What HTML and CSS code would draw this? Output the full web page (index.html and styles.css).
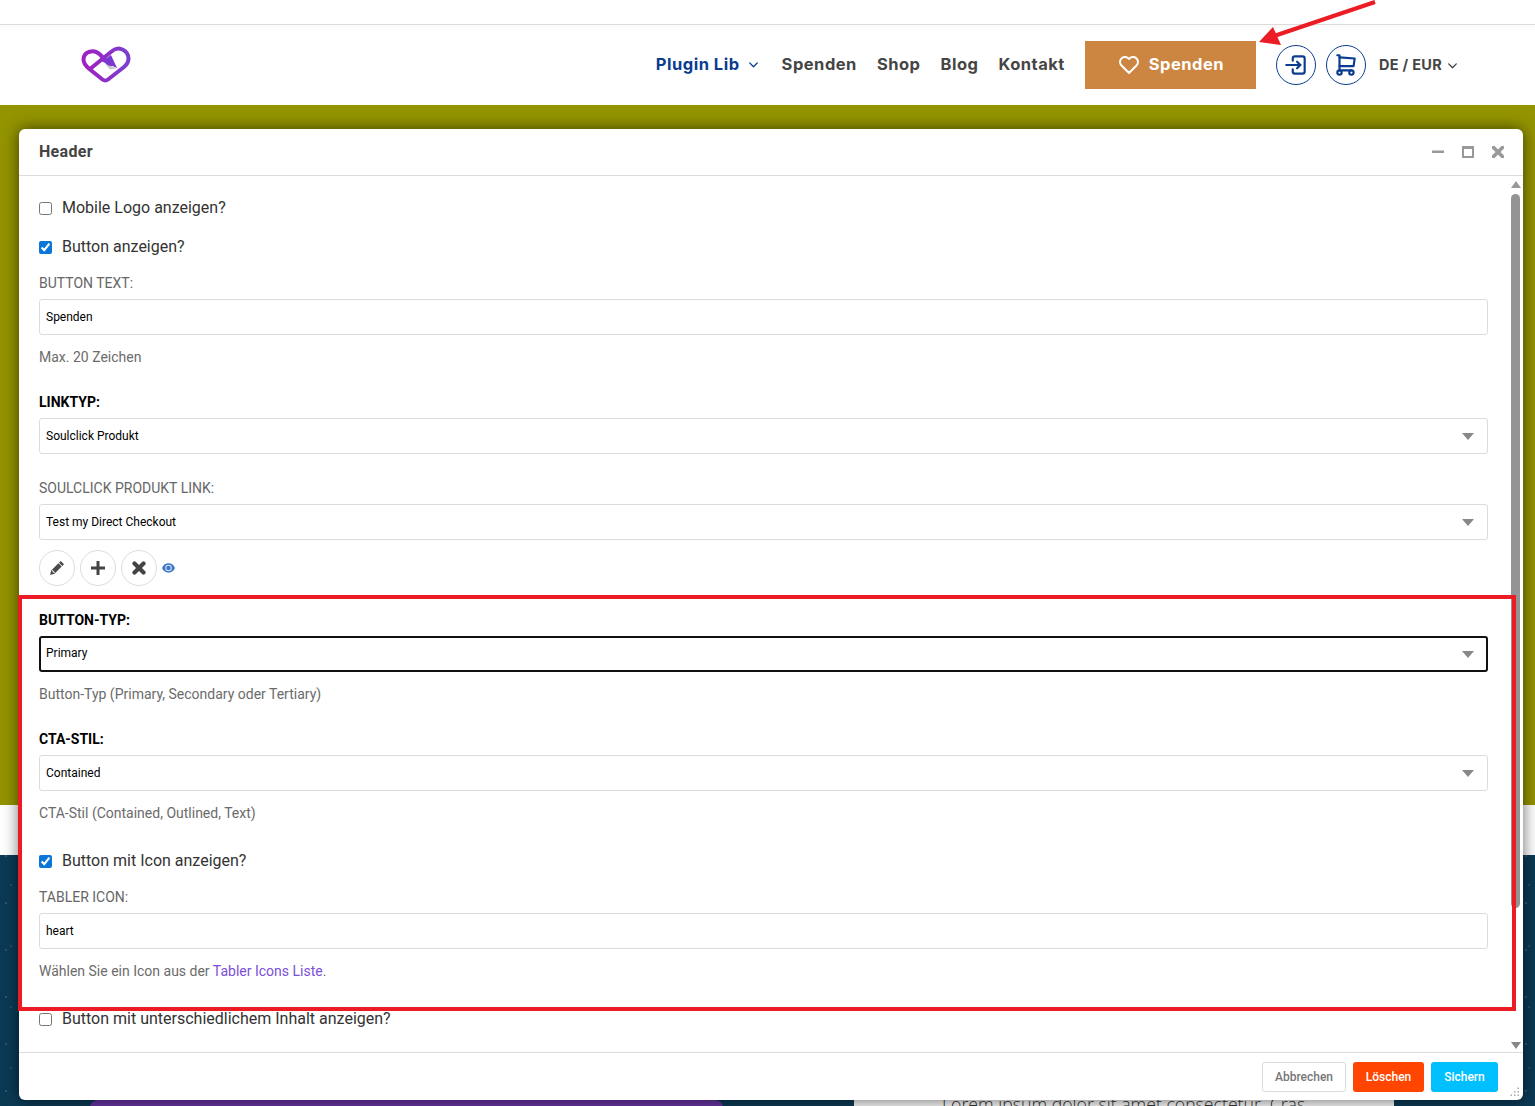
FILE: index.html
```html
<!DOCTYPE html>
<html lang="de">
<head>
<meta charset="utf-8">
<title>Header</title>
<link rel="stylesheet" href="styles.css">
</head>
<body>
<div class="page">
  <div class="topstrip"></div>
  <header class="site-header">
    <a class="logo" href="#" aria-label="Logo">
      <svg width="50" height="38" viewBox="81 46 50 38">
        <defs><linearGradient id="lg" x1="0" y1="0" x2="1" y2="0"><stop offset="0" stop-color="#a020c0"/><stop offset="1" stop-color="#7a3fd0"/></linearGradient></defs>
        <path d="M110 66 100 55.500C94 49.500 83.500 52.500 83.500 60.500C83.500 65.500 87 68 90 70.500L102.500 80.500C104.500 82 106 82 108 80.500L124 68C127 65.500 128.500 63 128.500 59.500C128.500 52.500 119.500 45.500 111.500 52.500L90 70" fill="none" stroke="url(#lg)" stroke-width="4" stroke-linejoin="round" stroke-linecap="round"/>
        <path d="M105 65 117 69.500 110 70.500Z" fill="#c9c9c9"/>
        <path d="M102 62.500 111 56 117 69Z" fill="#7a38d0"/>
      </svg>
    </a>
    <nav class="nav">
      <a class="nav-link active" href="#">Plugin Lib<svg class="chev" width="13" height="13" viewBox="0 0 24 24"><path d="M5 9l7 7 7-7"/></svg></a>
      <a class="nav-link" href="#">Spenden</a>
      <a class="nav-link" href="#">Shop</a>
      <a class="nav-link" href="#">Blog</a>
      <a class="nav-link" href="#">Kontakt</a>
    </nav>
    <a class="cta" href="#">
      <svg width="24" height="24" viewBox="0 0 24 24" fill="none" stroke="#fff" stroke-width="2" stroke-linecap="round" stroke-linejoin="round"><path d="M19.500 12.572l-7.500 7.428l-7.500 -7.428a5 5 0 1 1 7.500 -6.566a5 5 0 1 1 7.500 6.572"/></svg>
      <span>Spenden</span>
    </a>
    <a class="circle-btn" href="#" aria-label="Login">
      <svg width="26" height="26" viewBox="0 0 24 24" fill="none" stroke="#0a3d8f" stroke-width="2" stroke-linecap="round" stroke-linejoin="round"><path d="M9 8v-2a2 2 0 0 1 2 -2h7a2 2 0 0 1 2 2v12a2 2 0 0 1 -2 2h-7a2 2 0 0 1 -2 -2v-2"/><path d="M3 12h13l-3 -3"/><path d="M13 15l3 -3"/></svg>
    </a>
    <a class="circle-btn" href="#" aria-label="Warenkorb">
      <svg width="26" height="26" viewBox="0 0 24 24" fill="none" stroke="#0a3d8f" stroke-width="2" stroke-linecap="round" stroke-linejoin="round"><path d="M6 19m-2 0a2 2 0 1 0 4 0a2 2 0 1 0 -4 0"/><path d="M17 19m-2 0a2 2 0 1 0 4 0a2 2 0 1 0 -4 0"/><path d="M17 17h-11v-14h-2"/><path d="M6 5l14 1l-1 7h-13"/></svg>
    </a>
    <a class="lang" href="#">DE / EUR<svg class="chev" width="13" height="13" viewBox="0 0 24 24"><path d="M5 9l7 7 7-7"/></svg></a>
  </header>
  <section class="olive"></section>
  <section class="plain"></section>
  <section class="hero">
    <div class="purple"></div>
    <div class="hero-card"><p>Lorem ipsum dolor sit amet consectetur. Cras</p></div>
  </section>
</div>

<div class="modal">
  <div class="modal-head">
    <h2 class="modal-title">Header</h2>
    <div class="win-controls">
      <svg width="12" height="12" viewBox="0 0 12 12"><rect x="0" y="4.500" width="12" height="2.500" fill="#999"/></svg>
      <svg width="12" height="12" viewBox="0 0 12 12"><path d="M1 1h10v10H1z" fill="none" stroke="#999" stroke-width="2"/><rect x="0" y="0" width="12" height="3" fill="#999"/></svg>
      <svg width="12" height="12" viewBox="0 0 12 12"><path d="M1.500 1.500l9 9M10.500 1.500l-9 9" stroke="#999" stroke-width="3.600" stroke-linecap="round"/></svg>
    </div>
  </div>
  <div class="modal-body">
    <div class="content">
      <label class="check first"><input type="checkbox"><span>Mobile Logo anzeigen?</span></label>
      <label class="check second"><input type="checkbox" checked><span>Button anzeigen?</span></label>
      <div class="label sub">BUTTON TEXT:</div>
      <input class="control" type="text" value="Spenden">
      <div class="hint">Max. 20 Zeichen</div>

      <div class="label strong">LINKTYP:</div>
      <div class="select-wrap"><select class="control"><option>Soulclick Produkt</option></select></div>

      <div class="label sub after-select">SOULCLICK PRODUKT LINK:</div>
      <div class="select-wrap"><select class="control"><option>Test my Direct Checkout</option></select></div>

      <div class="actions">
        <button class="round" type="button" aria-label="Bearbeiten"><svg width="16" height="16" viewBox="0 0 16 16"><path d="M11.700 1l3.300 3.300-1.700 1.700-3.300-3.300zM9.400 3.300l3.300 3.300-7.200 7.200-4.400 1.200 1.100-4.500zM2.800 10.800l2.400 2.400.7-.7-2.400-2.400z" fill="#4a4a4a" fill-rule="evenodd"/></svg></button>
        <button class="round" type="button" aria-label="Neu"><svg width="14" height="14" viewBox="0 0 14 14"><path d="M5.500 0h3v5.500H14v3H8.500V14h-3V8.500H0v-3h5.500z" fill="#444"/></svg></button>
        <button class="round" type="button" aria-label="Entfernen"><svg width="14" height="14" viewBox="0 0 14 14"><path d="M2.500 2.500l9 9M11.500 2.500l-9 9" stroke="#444" stroke-width="4.200" stroke-linecap="round"/></svg></button>
        <svg class="eye" width="13" height="10" viewBox="0 0 14 10"><path d="M7 0C3.800 0 1.300 2 0 5c1.300 3 3.800 5 7 5s5.700-2 7-5C12.700 2 10.200 0 7 0z" fill="#3b78c9"/><circle cx="7" cy="5" r="3.500" fill="#dce8f7"/><circle cx="7" cy="5" r="2.400" fill="#3b78c9"/></svg>
      </div>

      <div class="label strong after-actions">BUTTON-TYP:</div>
      <div class="select-wrap"><select class="control focused"><option>Primary</option></select></div>
      <div class="hint">Button-Typ (Primary, Secondary oder Tertiary)</div>

      <div class="label strong">CTA-STIL:</div>
      <div class="select-wrap"><select class="control"><option>Contained</option></select></div>
      <div class="hint">CTA-Stil (Contained, Outlined, Text)</div>

      <label class="check after-hint"><input type="checkbox" checked><span>Button mit Icon anzeigen?</span></label>
      <div class="label sub">TABLER ICON:</div>
      <input class="control" type="text" value="heart">
      <div class="hint">Wählen Sie ein Icon aus der <a href="#">Tabler Icons Liste</a>.</div>

      <label class="check after-hint"><input type="checkbox"><span>Button mit unterschiedlichem Inhalt anzeigen?</span></label>
    </div>
    <div class="scrollbar">
      <span class="sb-up"></span>
      <span class="sb-thumb"></span>
      <span class="sb-down"></span>
    </div>
  </div>
  <div class="modal-foot">
    <button class="btn btn-cancel" type="button">Abbrechen</button>
    <button class="btn btn-delete" type="button">Löschen</button>
    <button class="btn btn-save" type="button">Sichern</button>
    <svg class="grip" width="10" height="10" viewBox="0 0 10 10"><g fill="#aaa"><rect x="7.500" y="0.500" width="1.500" height="1.500"/><rect x="4" y="4" width="1.500" height="1.500"/><rect x="7.500" y="4" width="1.500" height="1.500"/><rect x="0.500" y="7.500" width="1.500" height="1.500"/><rect x="4" y="7.500" width="1.500" height="1.500"/><rect x="7.500" y="7.500" width="1.500" height="1.500"/></g></svg>
  </div>
</div>

<div class="red-box"></div>
<svg class="red-arrow" width="125" height="50" viewBox="0 0 125 50"><path d="M118 2 17 36" stroke="#ec1c24" stroke-width="4" fill="none"/><path d="M2 42 16 27 24 45Z" fill="#ec1c24"/></svg>
</body>
</html>
```
FILE: styles.css
```css
* { box-sizing: border-box; }
html, body { margin: 0; padding: 0; height: 100%; overflow: hidden; background: #fff; }
body { font-family: Roboto, "Liberation Sans", sans-serif; position: relative; }
a { text-decoration: none; }

.page { display: flex; flex-direction: column; height: 1106px; overflow: hidden; }
.topstrip { height: 25px; background: #fff; border-bottom: 1px solid #dcdcdc; flex: none; }
.site-header { height: 80px; flex: none; display: flex; align-items: center; padding: 0 76px 0 81px; background: linear-gradient(#fbfbfb, #fff 8px); }
.logo { display: flex; margin-bottom: 2px; }
.nav { display: flex; align-items: center; gap: 20px; margin-left: auto; }
.nav-link { font: 700 16.500px/20px Inter, sans-serif; letter-spacing: .5px; color: #454545; display: flex; align-items: center; gap: 7px; white-space: nowrap; padding-bottom: 2px; }
.nav-link.active { color: #0a3d8f; margin-right: 2px; }
.chev { fill: none; stroke: currentColor; stroke-width: 2.500; stroke-linecap: round; stroke-linejoin: round; }
.cta { margin-left: 20px; width: 171px; height: 48px; background: #cd8642; display: flex; align-items: center; justify-content: center; gap: 8px; color: #fff; font: 700 16.500px/20px Inter, sans-serif; letter-spacing: .5px; }
.cta span { padding-bottom: 2px; }
.circle-btn { margin-left: 10px; width: 40px; height: 40px; border-radius: 50%; border: 1.500px solid #0a3d8f; display: flex; align-items: center; justify-content: center; }
.cta + .circle-btn { margin-left: 20px; }
.lang { margin-left: 13px; display: flex; align-items: center; gap: 4px; color: #454545; font: 700 14.500px/20px Inter, sans-serif; letter-spacing: .3px; white-space: nowrap; }

.olive { height: 700px; flex: none; background: #949400; }
.plain { height: 50px; flex: none; background: #fff; }
.hero { flex: none; height: 251px; background-color: #0b3a55; background-image: radial-gradient(circle at 6px 1px, rgba(160,190,205,.22) 0 1px, transparent 1.500px), radial-gradient(circle at 11px 30px, rgba(160,190,205,.16) 0 1px, transparent 1.500px); background-size: 19px 47px, 23px 61px; display: flex; align-items: flex-start; padding: 237px 141px 0 90px; overflow: hidden; }
.purple { width: 633px; height: 40px; background: #6633a0; border-radius: 8px; margin-top: 8px; }
.hero-card { margin-left: auto; width: 540px; height: 100px; background: #f7f7f7; padding: 0 88px; }
.hero-card p { margin: 0; font: 300 17.700px/24px "Open Sans", sans-serif; color: #333; white-space: nowrap; }

.modal { position: absolute; left: 19px; top: 129px; width: 1504px; height: 971px; background: #fff; border-radius: 6px; box-shadow: 0 0 16px rgba(0,0,0,.6); display: flex; flex-direction: column; }
.modal-head { height: 47px; flex: none; border-bottom: 1px solid #dcdcdc; display: flex; align-items: center; justify-content: space-between; padding: 0 19px 0 20px; }
.modal-title { margin: 0; font: 700 16px/20px Roboto, sans-serif; letter-spacing: .3px; color: #444; }
.win-controls { display: flex; gap: 18px; }
.modal-body { flex: 1; min-height: 0; display: flex; overflow: hidden; }
.content { flex: 1; min-width: 0; padding: 22px 0 0 20px; }
.check { display: flex; align-items: center; gap: 10px; height: 20px; font-size: 16px; line-height: 20px; color: #333; }
.check input { width: 13px; height: 13px; margin: 0; accent-color: #0b76d8; }
.check.second { margin-top: 19px; }
.check.after-hint { margin-top: 28px; }
.label { font-size: 14px; line-height: 20px; margin-bottom: 6px; }
.label.sub { color: #666; margin-top: 16px; }
.label.strong { color: #000; font-weight: 700; margin-top: 25px; }
.label.sub.after-select { margin-top: 24px; }
.label.strong.after-actions { margin-top: 24px; }
.control { display: block; width: 1449px; height: 36px; padding: 0 6px; font: 12px/20px Roboto, sans-serif; color: #000; background: #fff; border: 1px solid #dcdcdc; border-radius: 3px; outline: 0; appearance: none; }
.control.focused { border: 2px solid #111; padding: 0 5px 3px; }
.select-wrap { position: relative; width: 1449px; }
.select-wrap::after { content: ""; position: absolute; right: 14px; top: 15px; border-style: solid; border-width: 7px 6px 0; border-color: #888 transparent transparent; }
.hint { font-size: 14px; line-height: 20px; color: #6b6b6b; margin-top: 12px; }
.hint a { color: #7b4fd8; }
.actions { display: flex; align-items: center; gap: 5px; margin-top: 10px; }
.round { width: 36px; height: 36px; padding: 0; border-radius: 50%; border: 1px solid #dcdcdc; background: #fff; display: flex; align-items: center; justify-content: center; }

.scrollbar { width: 13px; margin-right: 1px; flex: none; display: flex; flex-direction: column; align-items: center; position: relative; }
.sb-up { margin-top: 5px; border-style: solid; border-width: 0 5px 7px; border-color: transparent transparent #999; }
.sb-thumb { width: 9px; height: 714px; margin-top: 6px; background: #949494; border-radius: 5px; }
.sb-down { position: absolute; bottom: 3px; border-style: solid; border-width: 7px 5px 0; border-color: #888 transparent transparent; }

.modal-foot { height: 48px; flex: none; border-top: 1px solid #dcdcdc; display: flex; align-items: center; justify-content: flex-end; gap: 7px; padding: 0 25px 0 0; position: relative; }
.btn { height: 30px; border-radius: 3px; font: 500 12px/28px Roboto, sans-serif; border: 1px solid transparent; padding: 0; }
.btn-cancel { width: 84px; background: #fff; border-color: #dcdcdc; color: #777; }
.btn-delete { width: 71px; background: #ff4500; color: #fff; }
.btn-save { width: 67px; background: #00bfff; color: #fff; }
.grip { position: absolute; right: 3px; bottom: 3px; }

.red-box { position: absolute; left: 18px; top: 595px; width: 1498px; height: 416px; border: 4px solid #ec1c24; pointer-events: none; }
.red-arrow { position: absolute; left: 1257px; top: 0; }
```
